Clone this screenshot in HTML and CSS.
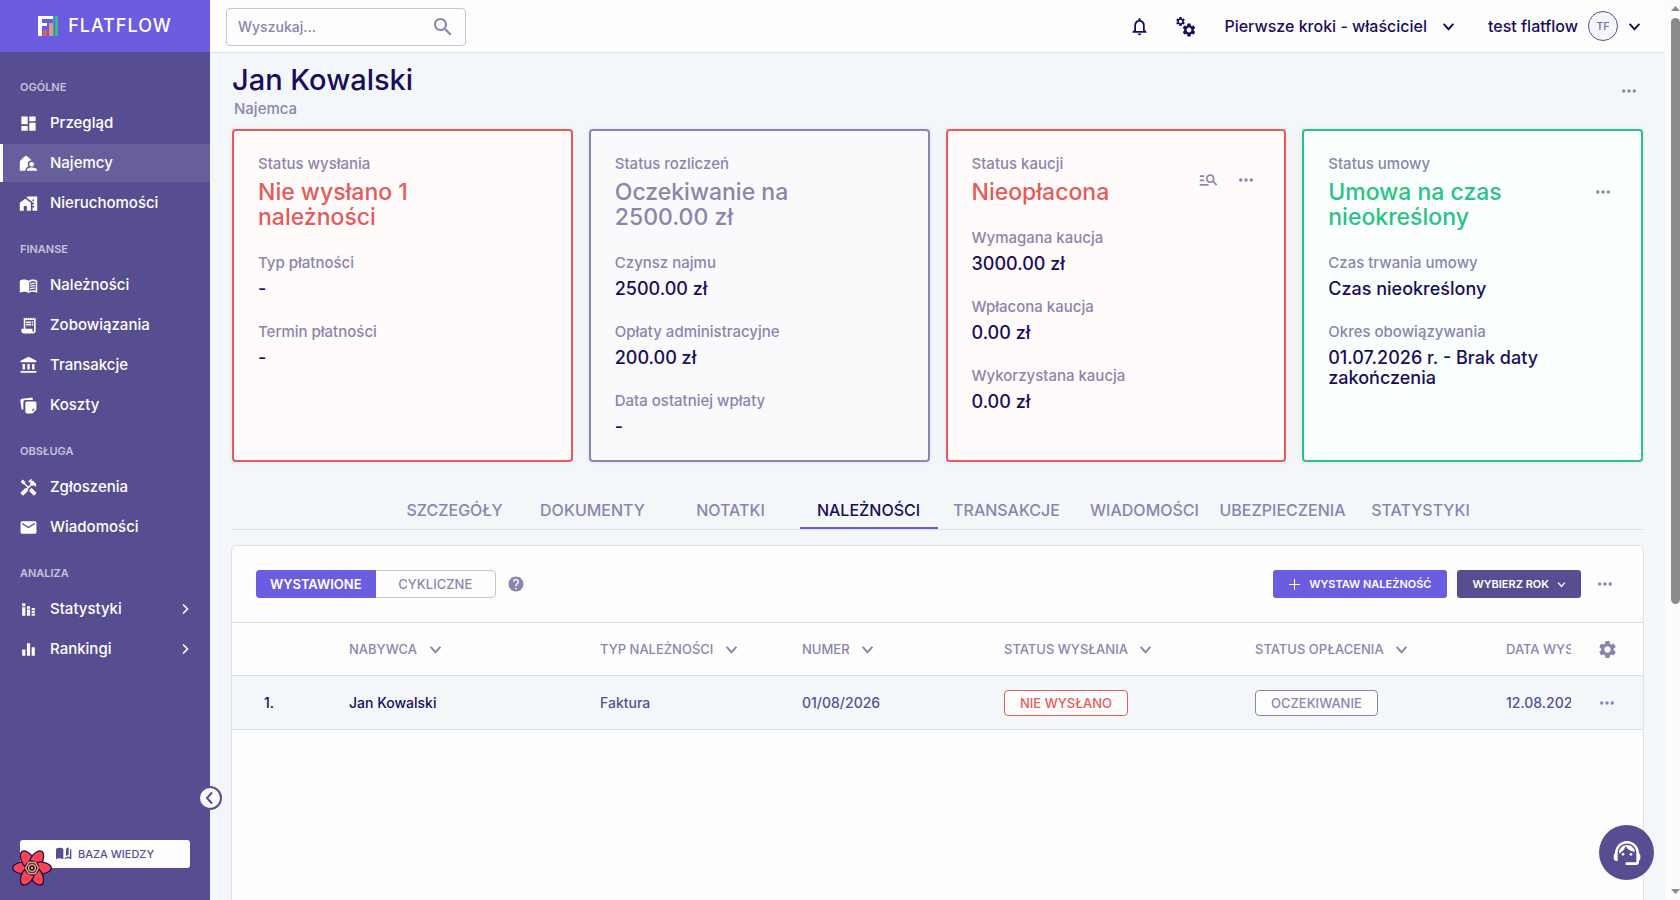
FILE: index.html
```html
<!DOCTYPE html>
<html lang="pl">

<head>
    <meta charset="UTF-8">
    <meta name="viewport" content="width=device-width, initial-scale=1.0">
    <title>Flatflow - Jan Kowalski</title>
    <link rel="stylesheet" href="styles.css">
</head>

<body>
    <!-- shared icons -->
    <svg class="sprite" aria-hidden="true">
        <symbol id="i-dots" viewBox="0 0 16 4"><circle cx="2" cy="2" r="2"/><circle cx="8" cy="2" r="2"/><circle cx="14" cy="2" r="2"/></symbol>
        <symbol id="i-down" viewBox="0 0 12 12"><path d="M1.500 3.500L6 8.500l4.500-5" fill="none" stroke="currentColor" stroke-width="1.800"/></symbol>
        <symbol id="i-right" viewBox="0 0 12 12"><path d="M4 1.500L8.500 6 4 10.500" fill="none" stroke="currentColor" stroke-width="1.600"/></symbol>
        <symbol id="i-gear" viewBox="0 0 24 24"><path d="M19.140 12.940c.04-.3.06-.61.06-.94 0-.32-.02-.64-.07-.94l2.030-1.580c.18-.14.23-.41.12-.61l-1.920-3.320c-.12-.22-.37-.29-.59-.22l-2.390.96c-.5-.38-1.030-.7-1.620-.94l-.36-2.540c-.04-.24-.24-.41-.48-.41h-3.840c-.24 0-.43.17-.47.41l-.36 2.540c-.59.24-1.130.57-1.620.94l-2.390-.96c-.22-.08-.47 0-.59.22L2.740 8.870c-.12.21-.08.47.12.61l2.030 1.580c-.05.3-.09.63-.09.94s.02.64.07.94l-2.030 1.580c-.18.14-.23.41-.12.61l1.920 3.320c.12.22.37.29.59.22l2.390-.96c.5.38 1.030.7 1.620.94l.36 2.540c.05.24.24.41.48.41h3.840c.24 0 .44-.17.47-.41l.36-2.540c.59-.24 1.130-.56 1.620-.94l2.390.96c.22.08.47 0 .59-.22l1.920-3.320c.12-.22.07-.47-.12-.61l-2.010-1.580zM12 15.600c-1.980 0-3.600-1.620-3.600-3.600s1.620-3.600 3.600-3.600 3.600 1.620 3.600 3.600-1.620 3.600-3.600 3.600z"/></symbol>
    </svg>

    <aside class="sidebar">
        <a class="logo" href="#">
            <svg width="20" height="20" viewBox="0 0 20 20" aria-hidden="true">
                <path d="M0 0h15v3H4v4h5v3H4v10H0z" fill="#fff"/>
                <path d="M15 0h1v20h-1z" fill="#5b8fe0"/>
                <path d="M17 0h3v20h-3z" fill="#2bc285"/>
                <path d="M11 7h4v13h-4z" fill="#d99a80"/>
                <path d="M5 14h4v6H5z" fill="#e45b5b"/>
            </svg>
            <span>FLATFLOW</span>
        </a>
        <nav class="menu">
            <h2>OGÓLNE</h2>
            <a href="#"><svg viewBox="0 0 24 24"><path d="M3 13h8V3H3v10zm0 8h8v-6H3v6zm10 0h8V11h-8v10zm0-18v6h8V3h-8z"/></svg>Przegląd</a>
            <a href="#" class="active"><svg viewBox="0 0 24 24"><path d="M1 21V9l5-5 3-2 7 6c-3 0-5 2-5 5 0 1 .3 2 .8 2.600C9.500 16.700 8 18.500 8 21z"/><circle cx="16" cy="13" r="3"/><path d="M10 21c0-3 3-4 6-4s7 1 7 4z"/></svg>Najemcy</a>
            <a href="#"><svg viewBox="0 0 24 24"><path d="M1 11v10h5v-6h4v6h5V11L8 6zM10 3v1.970l7 5V11h2v2h-2v2h2v2h-2v4h6V3H10zm9 6h-2V7h2v2z"/></svg>Nieruchomości</a>
            <h2>FINANSE</h2>
            <a href="#"><svg viewBox="0 0 24 24"><path d="M17.500 4.500c-1.950 0-4.050.4-5.500 1.500-1.450-1.100-3.550-1.500-5.500-1.500S2.450 4.900 1 6v14.650c.2.300.4.350.6.250C3 20.200 4.800 20 6.500 20s4 .4 5.500 1.500c1.500-1 3.800-1.500 5.500-1.500s3.300.3 4.750 1.050c.4.100.75-.2.750-.5V6c-1.500-1-3.500-1.500-5.500-1.500zM21 18.500c-3-1-6-.5-8 .500V8c2-1.500 5-2 8-1z"/><path d="M14 9.500c2-1 4-1.200 6-.8v1.500c-2-.4-4-.2-6 .8zM14 12.500c2-1 4-1.200 6-.8v1.500c-2-.4-4-.2-6 .8zM14 15.500c2-1 4-1.200 6-.8v1.500c-2-.4-4-.2-6 .8z"/></svg>Należności</a>
            <a href="#"><svg viewBox="0 0 24 24"><path d="M19.500 3.500L18 2l-1.500 1.500L15 2l-1.500 1.500L12 2l-1.500 1.500L9 2 7.500 3.500 6 2v14H3v3c0 1.660 1.340 3 3 3h12c1.660 0 3-1.340 3-3V2l-1.500 1.500zM19 19c0 .55-.45 1-1 1s-1-.45-1-1v-3H8V5h11v14z"/><path d="M9 7h6v2H9zM16 7h2v2h-2zM9 10h6v2H9zM16 10h2v2h-2z"/></svg>Zobowiązania</a>
            <a href="#"><svg viewBox="0 0 24 24"><path d="M4.500 10v7h3v-7zM10.500 10v7h3v-7zM2 19h20v2H2zM16.500 10v7h3v-7zM12 1L2 6v2h20V6z"/></svg>Transakcje</a>
            <a href="#"><svg viewBox="0 0 24 24"><path d="M10 7h10c1.100 0 2 .9 2 2v8l-5 5h-7c-1.100 0-2-.9-2-2V9c0-1.100.9-2 2-2zm7 13l3-4h-3z" fill-rule="evenodd"/><path d="M17 2L4 3.500C2.500 3.700 1.500 5 1.800 6.300L3.300 17H5.500V7.500C5.500 6 6.500 5 8 5h9.500z"/></svg>Koszty</a>
            <h2>OBSŁUGA</h2>
            <a href="#"><svg viewBox="0 0 24 24"><path d="M21.670 18.170l-5.300-5.300h-.99l-2.540 2.540v.99l5.300 5.300c.39.39 1.020.39 1.410 0l2.120-2.120c.39-.38.39-1.020 0-1.410zM17.340 10.190l1.410-1.410 2.120 2.120c1.170-1.170 1.170-3.070 0-4.240l-3.540-3.540-1.410 1.410V1.710L15.220 1l-3.540 3.540.71.71h2.830l-1.410 1.410 1.060 1.060-2.890 2.890-4.130-4.130V5.060L4.830 2.040 2 4.870 5.030 7.900h1.410l4.130 4.130-.85.85H7.600l-5.300 5.300c-.39.39-.39 1.020 0 1.410l2.120 2.120c.39.39 1.020.39 1.410 0l5.300-5.300v-2.120l5.150-5.150z"/></svg>Zgłoszenia</a>
            <a href="#"><svg viewBox="0 0 24 24"><path d="M20 4H4c-1.100 0-2 .9-2 2v12c0 1.100.9 2 2 2h16c1.100 0 2-.9 2-2V6c0-1.100-.9-2-2-2zm0 4l-8 5-8-5V6l8 5 8-5v2z"/></svg>Wiadomości</a>
            <h2>ANALIZA</h2>
            <a href="#"><svg viewBox="0 0 24 24"><path d="M4 4h4v4H4zM4 9h4v11H4zM10 8h4v3h-4zM10 12h4v8h-4zM16 10h4v3h-4zM16 14h4v2h-4zM16 17h4v3h-4z"/></svg>Statystyki<svg class="arrow"><use href="#i-right"/></svg></a>
            <a href="#"><svg viewBox="0 0 24 24"><path d="M4 12h4v8H4zM10 4h4v16h-4zM16 9h4v11h-4z"/></svg>Rankingi<svg class="arrow"><use href="#i-right"/></svg></a>
        </nav>
        <button class="knowledge">
            <svg width="16" height="14" viewBox="0 0 24 20"><path d="M0 2c4-2 8-2 11 0v16c-4-2-8-2-11 0zM13 18V16c3-2 5-2 8-1.500V3h2v15c-4-2-7-2-10 0zM15 2l4-2v11l-4 2z"/></svg>
            BAZA WIEDZY
        </button>
        <button class="collapse" aria-label="Zwiń menu">
            <svg width="16" height="16" viewBox="0 0 16 16"><path d="M10 2.500L5 8l5 5.500" fill="none" stroke="#574e92" stroke-width="2"/></svg>
        </button>
        <button class="devtools" aria-label="Devtools">
            <svg width="40" height="40" viewBox="-20 -20 40 40">
                <g fill="#ff4154" stroke="#17104f" stroke-width="1.300">
                    <path id="petal" d="M-5 -5.500C-9 -6.800 -15 -5.500 -18 -2.800Q-20.600 0 -18 2.800C-15 5.500 -9 6.800 -5 5.500z"/>
                    <use href="#petal" transform="rotate(60)"/>
                    <use href="#petal" transform="rotate(120)"/>
                    <use href="#petal" transform="rotate(180)"/>
                    <use href="#petal" transform="rotate(240)"/>
                    <use href="#petal" transform="rotate(300)"/>
                </g>
                <circle r="7.500" fill="#17104f"/>
                <path d="M-3.200-5.600h6.400L6.400 0 3.200 5.600h-6.400L-6.400 0z" fill="none" stroke="#f0a868" stroke-width="1.500"/>
                <circle r="3.400" fill="none" stroke="#f0a868" stroke-width="1.400"/>
                <circle r="1.200" fill="#f0a868"/>
            </svg>
        </button>
    </aside>

    <div class="page">
        <header class="topbar">
            <div class="search">
                <input type="text" id="search" placeholder="Wyszukaj..." aria-label="Wyszukaj">
                <svg width="24" height="24" viewBox="0 0 24 24"><path d="M15.500 14h-.79l-.28-.27C15.410 12.590 16 11.110 16 9.500 16 5.910 13.090 3 9.500 3S3 5.910 3 9.500 5.910 16 9.500 16c1.610 0 3.090-.59 4.230-1.570l.27.28v.79l5 4.990L20.490 19l-4.990-5zm-6 0C7.010 14 5 11.990 5 9.500S7.010 5 9.500 5 14 7.010 14 9.500 11.990 14 9.500 14z"/></svg>
            </div>
            <button class="plain bell" aria-label="Powiadomienia">
                <svg width="21" height="21" viewBox="0 0 24 24"><path d="M12 22c1.100 0 2-.9 2-2h-4c0 1.100.9 2 2 2zm6-6v-5c0-3.070-1.630-5.640-4.500-6.320V4c0-.83-.67-1.500-1.500-1.500s-1.500.67-1.500 1.500v.68C7.640 5.360 6 7.920 6 11v5l-2 2v1h16v-1l-2-2zm-2 1H8v-6c0-2.480 1.510-4.500 4-4.500s4 2.020 4 4.500v6z"/></svg>
            </button>
            <button class="plain gears" aria-label="Ustawienia">
                <svg width="20" height="21" viewBox="0 0 20 21"><use href="#i-gear" width="11" height="11" x="-1"/><use href="#i-gear" width="16" height="16" x="5" y="6"/></svg>
            </button>
            <button class="plain account">Pierwsze kroki - właściciel <svg width="13" height="13"><use href="#i-down"/></svg></button>
            <button class="plain user">test flatflow <span class="avatar">TF</span> <svg width="13" height="13"><use href="#i-down"/></svg></button>
        </header>

        <main>
            <div class="heading">
                <div>
                    <h1>Jan Kowalski</h1>
                    <p>Najemca</p>
                </div>
                <button class="plain more" aria-label="Więcej"><svg><use href="#i-dots"/></svg></button>
            </div>

            <section class="cards">
                <div class="card red">
                    <div class="card-head">
                        <div>
                            <p class="label">Status wysłania</p>
                            <h3>Nie wysłano 1<br>należności</h3>
                        </div>
                    </div>
                    <dl>
                        <dt>Typ płatności</dt>
                        <dd>-</dd>
                        <dt>Termin płatności</dt>
                        <dd>-</dd>
                    </dl>
                </div>
                <div class="card grey">
                    <div class="card-head">
                        <div>
                            <p class="label">Status rozliczeń</p>
                            <h3>Oczekiwanie na<br>2500.00 zł</h3>
                        </div>
                    </div>
                    <dl>
                        <dt>Czynsz najmu</dt>
                        <dd>2500.00 zł</dd>
                        <dt>Opłaty administracyjne</dt>
                        <dd>200.00 zł</dd>
                        <dt>Data ostatniej wpłaty</dt>
                        <dd>-</dd>
                    </dl>
                </div>
                <div class="card red">
                    <div class="card-head">
                        <div>
                            <p class="label">Status kaucji</p>
                            <h3>Nieopłacona</h3>
                        </div>
                        <div class="card-actions">
                            <button class="plain more" aria-label="Szczegóły kaucji">
                                <svg class="find" viewBox="0 0 24 24"><path d="M7 9H2V7h5v2zm0 3H2v2h5v-2zm13.590 7l-3.830-3.830c-.8.520-1.740.83-2.760.83-2.760 0-5-2.240-5-5s2.240-5 5-5 5 2.240 5 5c0 1.020-.31 1.960-.83 2.750L22 17.590 20.590 19zM17 11c0-1.650-1.350-3-3-3s-3 1.350-3 3 1.350 3 3 3 3-1.350 3-3zM2 19h10v-2H2v2z"/></svg>
                            </button>
                            <button class="plain more" aria-label="Więcej"><svg><use href="#i-dots"/></svg></button>
                        </div>
                    </div>
                    <dl>
                        <dt>Wymagana kaucja</dt>
                        <dd>3000.00 zł</dd>
                        <dt>Wpłacona kaucja</dt>
                        <dd>0.00 zł</dd>
                        <dt>Wykorzystana kaucja</dt>
                        <dd>0.00 zł</dd>
                    </dl>
                </div>
                <div class="card green">
                    <div class="card-head">
                        <div>
                            <p class="label">Status umowy</p>
                            <h3>Umowa na czas<br>nieokreślony</h3>
                        </div>
                        <div class="card-actions">
                            <button class="plain more" aria-label="Więcej"><svg><use href="#i-dots"/></svg></button>
                        </div>
                    </div>
                    <dl>
                        <dt>Czas trwania umowy</dt>
                        <dd>Czas nieokreślony</dd>
                        <dt>Okres obowiązywania</dt>
                        <dd>01.07.2026 r. - Brak daty<br>zakończenia</dd>
                    </dl>
                </div>
            </section>

            <nav class="tabs">
                <a href="#">SZCZEGÓŁY</a>
                <a href="#">DOKUMENTY</a>
                <a href="#">NOTATKI</a>
                <a href="#" class="active">NALEŻNOŚCI</a>
                <a href="#">TRANSAKCJE</a>
                <a href="#">WIADOMOŚCI</a>
                <a href="#">UBEZPIECZENIA</a>
                <a href="#">STATYSTYKI</a>
            </nav>

            <section class="panel">
                <div class="toolbar">
                    <div class="switch">
                        <button class="active">WYSTAWIONE</button>
                        <button>CYKLICZNE</button>
                    </div>
                    <button class="plain help" aria-label="Pomoc">
                        <svg width="18" height="18" viewBox="0 0 24 24"><path d="M12 2C6.480 2 2 6.480 2 12s4.480 10 10 10 10-4.480 10-10S17.520 2 12 2zm1 17h-2v-2h2v2zm2.070-7.750l-.9.920C13.450 12.900 13 13.500 13 15h-2v-.5c0-1.100.45-2.100 1.170-2.830l1.240-1.260c.37-.36.59-.86.59-1.410 0-1.100-.9-2-2-2s-2 .9-2 2H8c0-2.210 1.790-4 4-4s4 1.790 4 4c0 .88-.36 1.680-.93 2.250z"/></svg>
                    </button>
                    <div class="toolbar-right">
                        <button class="btn"><svg width="11" height="11" viewBox="0 0 11 11"><path d="M5 0h1v5h5v1H6v5H5V6H0V5h5z"/></svg>WYSTAW NALEŻNOŚĆ</button>
                        <button class="btn dark">WYBIERZ ROK<svg width="9" height="9"><use href="#i-down"/></svg></button>
                        <button class="plain more" aria-label="Więcej"><svg><use href="#i-dots"/></svg></button>
                    </div>
                </div>
                <table>
                    <colgroup>
                        <col class="c-no"><col class="c-wide"><col class="c-mid"><col class="c-mid"><col class="c-wide"><col class="c-wide"><col><col class="c-act">
                    </colgroup>
                    <thead>
                        <tr>
                            <th></th>
                            <th>NABYWCA <svg><use href="#i-down"/></svg></th>
                            <th>TYP NALEŻNOŚCI <svg><use href="#i-down"/></svg></th>
                            <th>NUMER <svg><use href="#i-down"/></svg></th>
                            <th>STATUS WYSŁANIA <svg><use href="#i-down"/></svg></th>
                            <th>STATUS OPŁACENIA <svg><use href="#i-down"/></svg></th>
                            <th>DATA WYSTAWIENIA</th>
                            <th class="act"><button class="plain set" aria-label="Kolumny"><svg width="21" height="21"><use href="#i-gear"/></svg></button></th>
                        </tr>
                    </thead>
                    <tbody>
                        <tr>
                            <td class="no">1.</td>
                            <td class="name">Jan Kowalski</td>
                            <td>Faktura</td>
                            <td>01/08/2026</td>
                            <td><span class="badge red">NIE WYSŁANO</span></td>
                            <td><span class="badge">OCZEKIWANIE</span></td>
                            <td>12.08.2026</td>
                            <td class="act"><button class="plain more" aria-label="Więcej"><svg><use href="#i-dots"/></svg></button></td>
                        </tr>
                    </tbody>
                </table>
            </section>
        </main>
    </div>

    <div class="scrollbar" aria-hidden="true">
        <svg width="9" height="5" viewBox="0 0 9 5"><path d="M0 5L4.500 0 9 5z"/></svg>
        <div class="thumb"></div>
        <svg width="9" height="5" viewBox="0 0 9 5"><path d="M0 0l4.500 5L9 0z"/></svg>
    </div>

    <button class="support" aria-label="Pomoc techniczna">
        <svg width="32" height="32" viewBox="0 0 24 24"><path d="M21 12.220C21 6.730 16.740 3 12 3c-4.690 0-9 3.650-9 9.280-.6.34-1 .98-1 1.720v2c0 1.100.9 2 2 2h1v-6.100c0-3.870 3.130-7 7-7s7 3.130 7 7V19h-8v2h8c1.100 0 2-.9 2-2v-1.220c.59-.31 1-.92 1-1.640v-2.300c0-.7-.41-1.310-1-1.620z"/><circle cx="9" cy="13" r="1"/><circle cx="15" cy="13" r="1"/><path d="M18 11.030C17.520 8.180 15.040 6 12.050 6c-3.030 0-6.290 2.510-6.030 6.450 2.470-1.010 4.330-3.210 4.860-5.890 1.310 2.630 4 4.440 7.120 4.470z"/></svg>
    </button>
</body>

</html>
```
FILE: styles.css
```css
* {
    box-sizing: border-box;
}

body {
    font-family: "Inter", sans-serif;
    font-size: 14px;
    font-weight: 500;
    line-height: 20px;
    margin: 0;
    height: 100vh;
    display: flex;
    overflow: hidden;
    background-color: #f4f7fa;
    color: #190d5c;
}

h1, h2, h3, p, dl, dd {
    margin: 0;
    font-weight: 500;
}

a {
    color: inherit;
    text-decoration: none;
}

button {
    font: inherit;
    color: inherit;
    padding: 0;
    border: 0;
    cursor: pointer;
}

svg {
    fill: currentColor;
    flex: none;
}

.sprite {
    position: absolute;
    width: 0;
    height: 0;
}

.plain {
    background: none;
    display: flex;
    align-items: center;
    justify-content: center;
}

/* sidebar */
.sidebar {
    position: relative;
    flex: none;
    width: 210px;
    display: flex;
    flex-direction: column;
    background-color: #574e92;
    color: #fff;
}

.logo {
    display: flex;
    align-items: center;
    justify-content: center;
    gap: 10px;
    height: 52px;
    background-color: #6b5ce0;
    font-size: 18px;
    letter-spacing: 1px;
}

.menu {
    padding-top: 8px;
    flex: 1;
}

.menu h2 {
    margin: 18px 20px 8px;
    font-size: 11px;
    font-weight: 600;
    line-height: 18px;
    color: #c6c2da;
}

.menu a {
    display: flex;
    align-items: center;
    gap: 12px;
    height: 38px;
    margin-bottom: 2px;
    padding: 0 19px;
    font-size: 15px;
}

.menu a.active {
    background-color: #675f9c;
    box-shadow: inset 3px 0 #fff;
}

.menu svg {
    width: 19px;
    height: 19px;
}

.menu .arrow {
    width: 12px;
    height: 12px;
    margin-left: auto;
}

.knowledge {
    display: flex;
    align-items: center;
    justify-content: center;
    gap: 6px;
    height: 28px;
    margin: 0 20px 32px;
    border-radius: 3px;
    background-color: #fdfdfd;
    color: #574e92;
    font-size: 11px;
}

.collapse {
    position: absolute;
    right: -12px;
    bottom: 90px;
    width: 24px;
    height: 24px;
    display: flex;
    align-items: center;
    justify-content: center;
    border: 2px solid #574e92;
    border-radius: 50%;
    background-color: #fdfdfd;
}

.devtools {
    position: absolute;
    left: 12px;
    bottom: 12px;
    width: 40px;
    height: 40px;
    background: none;
}

/* top bar */
.page {
    flex: 1;
    min-width: 0;
    display: flex;
    flex-direction: column;
}

.topbar {
    flex: none;
    display: flex;
    align-items: center;
    height: 53px;
    padding: 0 24px 0 16px;
    background-color: #fdfdfd;
    border-bottom: 1px solid #e2e0ee;
    font-size: 16px;
}

.search {
    display: flex;
    align-items: center;
    width: 240px;
    height: 38px;
    margin: 2px auto 0 0;
    padding: 0 10px 0 11px;
    border: 1px solid #c6c2da;
    border-radius: 4px;
    color: #8b85ad;
}

.search input {
    flex: 1;
    min-width: 0;
    padding: 0;
    border: 0;
    outline: 0;
    background: none;
    font: inherit;
    font-size: 14px;
}

.search input::placeholder {
    color: #8b85ad;
}

.gears {
    margin: 0 28px 0 26px;
}

.account {
    gap: 15px;
    margin-right: 33px;
}

.user {
    gap: 10px;
}

.avatar {
    width: 30px;
    height: 30px;
    border: 1px solid #574e92;
    border-radius: 50%;
    background-color: #f4f7fa;
    color: #766fa5;
    font-size: 11px;
    line-height: 28px;
}

/* content */
main {
    flex: 1;
    min-height: 0;
    overflow: hidden;
    padding: 8px 22px 0;
}

.heading {
    display: flex;
    align-items: center;
    justify-content: space-between;
    height: 60px;
    margin-bottom: 8px;
}

.heading h1 {
    font-size: 29px;
    line-height: 34px;
}

.heading p {
    margin: 2px 0 0 2px;
    color: #8b85ad;
    font-size: 15px;
}

.more {
    width: 28px;
    height: 28px;
    color: #8b85ad;
}

.more svg {
    width: 14px;
    height: 4px;
}

.more .find {
    width: 21px;
    height: 21px;
}

.cards {
    display: grid;
    grid-template-columns: repeat(4, 1fr);
    gap: 16px;
}

.card {
    min-height: 333px;
    padding: 23px 24px;
    border: 2px solid;
    border-radius: 4px;
    box-shadow: 0 0 4px #dfe0ea;
}

.card-head {
    display: flex;
    align-items: center;
    justify-content: space-between;
}

.card-actions {
    display: flex;
    gap: 10px;
}

.card h3 {
    margin-top: 6px;
    font-size: 23px;
    line-height: 25px;
}

.card .label, .card dt {
    color: #8b85ad;
    font-size: 15px;
}

.card dt {
    margin-top: 23px;
}

.card dd {
    margin-top: 6px;
    color: #190d5c;
    font-size: 18px;
}

.card.red {
    color: #e45b5b;
    background-color: #fffbfa;
}

.card.grey {
    color: #8b85ad;
    background-color: #fafafd;
}

.card.green {
    color: #2bc285;
    background-color: #fafffd;
}

.tabs {
    display: flex;
    justify-content: center;
    margin-top: 29px;
    border-bottom: 1px solid #dcdde6;
    color: #8b85ad;
    font-size: 16px;
}

.tabs a {
    width: 138px;
    padding: 9px 0 7px;
    border-bottom: 2px solid transparent;
    text-align: center;
}

.tabs a.active {
    border-color: #6b5ce0;
    color: #190d5c;
}

/* table panel */
.panel {
    min-height: 600px;
    margin: 15px -1px 0;
    border: 1px solid #e0e0ea;
    border-radius: 6px;
    background-color: #fdfdfd;
}

.toolbar {
    display: flex;
    align-items: center;
    height: 76px;
    padding: 0 24px;
}

.switch {
    display: flex;
    width: 240px;
    height: 28px;
    border: 1px solid #c6c2da;
    border-radius: 4px;
}

.switch button {
    flex: 1;
    background: none;
    color: #8b85ad;
    font-size: 13px;
}

.switch .active {
    margin: -1px 0 -1px -1px;
    border-radius: 4px 0 0 4px;
    background-color: #6b5ce0;
    color: #fff;
    font-weight: 600;
}

.help {
    margin-left: 11px;
    color: #8b85ad;
}

.toolbar-right {
    display: flex;
    align-items: center;
    gap: 10px;
    margin-left: auto;
}

.btn {
    display: flex;
    align-items: center;
    justify-content: center;
    gap: 9px;
    height: 28px;
    padding: 0 16px;
    border-radius: 3px;
    background-color: #6b5ce0;
    color: #fff;
    font-size: 11px;
    font-weight: 600;
}

.btn.dark {
    gap: 8px;
    padding: 0 15px;
    background-color: #574e92;
}

table {
    width: 100%;
    table-layout: fixed;
    border-collapse: collapse;
}

.c-no {
    width: 117px;
}

.c-wide {
    width: 251px;
}

.c-mid {
    width: 202px;
}

.c-act {
    width: 72px;
}

th, td {
    height: 53px;
    padding: 0;
    overflow: hidden;
    white-space: nowrap;
    text-align: left;
    font-weight: 500;
    border-top: 1px solid #dcdde6;
}

th {
    color: #8b85ad;
    font-size: 13px;
}

td {
    height: 54px;
}

th > svg {
    width: 13px;
    height: 13px;
    margin-left: 8px;
    vertical-align: -2px;
}

tbody tr {
    background-color: #f4f7fa;
    color: #574e92;
    border-bottom: 1px solid #dcdde6;
}

.no {
    padding-left: 32px;
}

.no, .name {
    color: #190d5c;
}

.act button {
    margin: 0 auto;
}

.set {
    color: #8b85ad;
}

.badge {
    display: inline-block;
    padding: 2px 15px;
    border: 1px solid #8b85ad;
    border-radius: 4px;
    background-color: #fdfdfd;
    color: #8b85ad;
    font-size: 13px;
}

.badge.red {
    border-color: #e45b5b;
    color: #e45b5b;
}

/* scrollbar and floating button */
.scrollbar {
    flex: none;
    width: 15px;
    display: flex;
    flex-direction: column;
    align-items: center;
    padding: 6px 0 6px 5px;
    background-color: #fcfcfc;
    color: #8b8b8b;
}

.thumb {
    width: 9px;
    height: 66%;
    margin: 7px 0 auto;
    border-radius: 5px;
    background-color: #8b8b8b;
}

.support {
    position: fixed;
    right: 26px;
    bottom: 20px;
    width: 55px;
    height: 55px;
    display: flex;
    align-items: center;
    justify-content: center;
    border-radius: 50%;
    background-color: #574e92;
    color: #fff;
}
```
